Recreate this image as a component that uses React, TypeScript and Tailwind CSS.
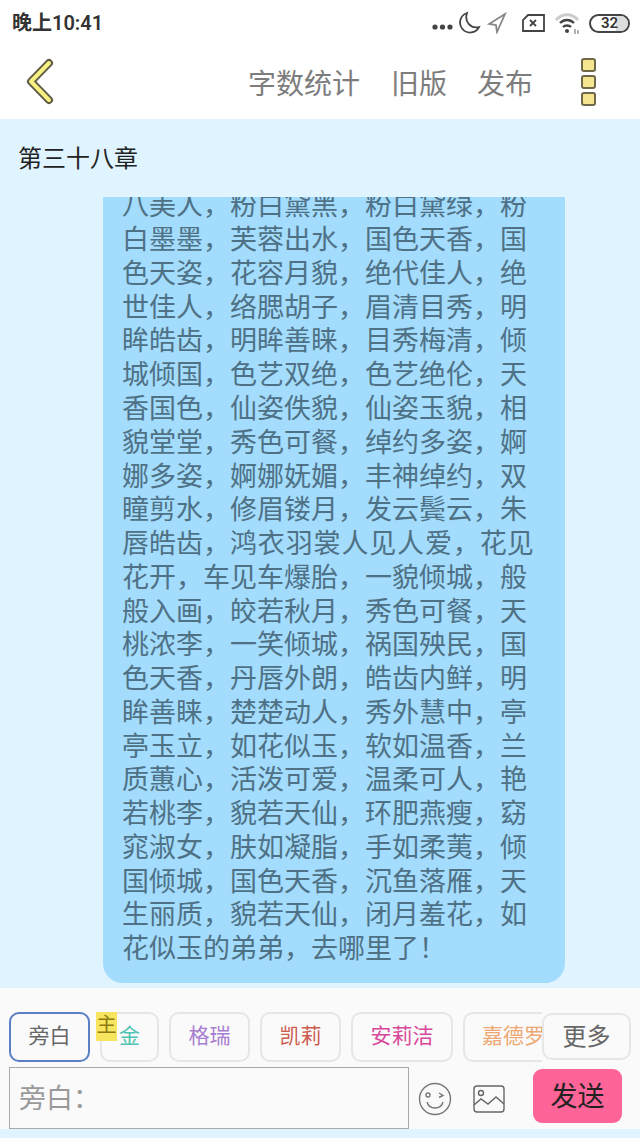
const FONT = "font-['Roboto','Noto_Sans_CJK_SC',sans-serif]";

const lines = [
  "八美人，粉白黛黑，粉白黛绿，粉",
  "白墨墨，芙蓉出水，国色天香，国",
  "色天姿，花容月貌，绝代佳人，绝",
  "世佳人，络腮胡子，眉清目秀，明",
  "眸皓齿，明眸善睐，目秀梅清，倾",
  "城倾国，色艺双绝，色艺绝伦，天",
  "香国色，仙姿佚貌，仙姿玉貌，相",
  "貌堂堂，秀色可餐，绰约多姿，婀",
  "娜多姿，婀娜妩媚，丰神绰约，双",
  "瞳剪水，修眉镂月，发云鬓云，朱",
  "",
  "花开，车见车爆胎，一貌倾城，般",
  "般入画，皎若秋月，秀色可餐，天",
  "桃浓李，一笑倾城，祸国殃民，国",
  "色天香，丹唇外朗，皓齿内鲜，明",
  "眸善睐，楚楚动人，秀外慧中，亭",
  "亭玉立，如花似玉，软如温香，兰",
  "质蕙心，活泼可爱，温柔可人，艳",
  "若桃李，貌若天仙，环肥燕瘦，窈",
  "窕淑女，肤如凝脂，手如柔荑，倾",
  "国倾城，国色天香，沉鱼落雁，天",
  "生丽质，貌若天仙，闭月羞花，如",
  "花似玉的弟弟，去哪里了！",
];

function Chip({ label, color, w, active }: { label: string; color: string; w: string; active?: boolean }) {
  return (
    <div
      className={`${w} h-[50px] shrink-0 flex items-center justify-center rounded-[10px] border-2 text-[21px] ${color} ${
        active ? "border-[#5b7fc4]" : "border-[#e6e6e6]"
      }`}
    >
      {label}
    </div>
  );
}

function Dot() {
  return <div className="w-[15px] h-[14px] rounded-[3px] bg-[#f5e58f] border-2 border-[#70684a]" />;
}

export default function App() {
  return (
    <div className={`${FONT} w-[640px] h-[1138px] overflow-hidden flex flex-col bg-[#dff4ff]`}>
      <div className="bg-white h-[119px] shrink-0 flex flex-col">
        <div className="h-[46px] flex items-center pl-3 pr-[10px]">
          <span className="text-[20px] font-semibold text-[#333]">晚上10:41</span>
          <div className="ml-auto flex items-center">
            <svg width="21" height="8" viewBox="0 0 21 8" className="mt-2">
              <circle cx="3" cy="4" r="2.6" fill="#444" />
              <circle cx="10.5" cy="4" r="2.6" fill="#444" />
              <circle cx="18" cy="4" r="2.6" fill="#444" />
            </svg>
            <svg width="24" height="26" viewBox="0 0 24 26" className="ml-[5px]" fill="none" stroke="#444" strokeWidth="1.8">
              <path d="M9 3 A10 10 0 1 0 21 17 C13 19 6 12 9 3 Z" />
            </svg>
            <svg width="20" height="22" viewBox="0 0 20 22" className="ml-[5px]" fill="none" stroke="#888" strokeWidth="1.8">
              <path d="M18 2 L2 12 L9 13 L10 20 Z" />
            </svg>
            <svg width="25" height="20" viewBox="0 0 25 20" className="ml-[14px]" fill="none" stroke="#444" strokeWidth="1.8">
              <path d="M7 2 H23 V18 H2 V7 Z" />
              <path d="M9 7 L15 13 M15 7 L9 13" />
            </svg>
            <svg width="26" height="24" viewBox="0 0 26 24" className="ml-[8px]" fill="none">
              <path d="M2 9 C8 2 18 2 24 9" stroke="#ccc" strokeWidth="3" />
              <path d="M6 12 C10 8 16 8 20 12" stroke="#444" strokeWidth="2.4" />
              <path d="M9 16 C11 14 15 14 17 16" stroke="#444" strokeWidth="2.4" />
              <circle cx="13" cy="20" r="2" fill="#444" />
              <path d="M21 18 V23 M24 19 V23" stroke="#666" strokeWidth="1" />
            </svg>
            <div className="ml-[9px] relative w-[41px] h-[19px] rounded-full border-2 border-[#444] overflow-hidden flex items-center justify-center">
              <div className="absolute right-0 top-0 bottom-0 w-[12px] bg-[#ddd]" />
              <span className="relative text-[15px] font-semibold text-[#333] leading-none">32</span>
            </div>
          </div>
        </div>
        <div className="flex-1 flex items-center relative">
          <svg width="34" height="48" viewBox="0 0 34 48" className="ml-[24px] -mt-[2px]">
            <path d="M25 5 L7 23.5 L25 42" fill="none" stroke="#5f5c4a" strokeWidth="8" strokeLinecap="round" strokeLinejoin="round" />
            <path d="M25 5 L7 23.5 L25 42" fill="none" stroke="#f8f07f" strokeWidth="4" strokeLinecap="round" strokeLinejoin="round" />
          </svg>
          <div className="ml-auto flex items-center text-[28px] text-[#7d7d7d] mr-[44px]">
            <span className="mt-[4px]">字数统计</span>
            <span className="mt-[4px] ml-[31px]">旧版</span>
            <span className="mt-[4px] ml-[30px]">发布</span>
            <div className="ml-[48px] flex flex-col gap-[3px] -mt-[1px]">
              <Dot />
              <Dot />
              <Dot />
            </div>
          </div>
        </div>
      </div>

      <div className="h-[78px] shrink-0 flex items-center pl-[18px] pt-[2px] text-[24px] text-[#222]">第三十八章</div>

      <div className="h-[791px] shrink-0 overflow-hidden flex flex-col justify-end items-start pl-[103px]">
        <div className="w-[462px] mb-[5px] shrink-0 bg-[#a3dcfd] rounded-b-[20px] pl-[19px] pb-[16px] text-[27px] leading-[33.77px] text-[#4f7185]">
          {lines.map((l, i) =>
            l ? (
              <div key={i} className="whitespace-nowrap">{l}</div>
            ) : (
              <div key={i} className="whitespace-nowrap">
                唇皓齿，<span className="tracking-[0.85px]">鸿衣羽裳人见人爱</span>，花见
              </div>
            )
          )}
        </div>
      </div>

      <div className="h-[141px] shrink-0 bg-[#fafafa] flex flex-col">
        <div className="relative h-[79px] pt-[24px] pl-[9px] flex">
          <div className="w-[533px] overflow-hidden flex gap-[10px]">
            <Chip label="旁白" color="text-[#666]" w="w-[81px]" active />
            <Chip label="金" color="text-[#4fc4b4]" w="w-[59px]" />
            <Chip label="格瑞" color="text-[#a87fd0]" w="w-[81px]" />
            <Chip label="凯莉" color="text-[#cd5c50]" w="w-[81px]" />
            <Chip label="安莉洁" color="text-[#d8489a]" w="w-[102px]" />
            <Chip label="嘉德罗斯" color="text-[#eda873]" w="w-[122px]" />
          </div>
          <div className="absolute left-[96px] top-[24px] w-[21px] h-[29px] bg-[#f7e560] text-[20px] leading-[27px] text-[#8a7a10] text-center">主</div>
          <div className="absolute left-[542px] top-[25px] w-[89px] h-[47px] bg-[#fafafa] rounded-[10px] border-2 border-[#e6e6e6] flex items-center justify-center text-[24px] text-[#666]">更多</div>
        </div>
        <div className="flex items-start pl-[9px]">
          <div className="w-[400px] h-[62px] border border-[#aaa] flex items-center pl-[9px] pt-[3px] text-[27px] text-[#999]">旁白：</div>
          <svg width="34" height="34" viewBox="0 0 34 34" className="ml-[9px] mt-[15px]" fill="none" stroke="#777" strokeWidth="1.4">
            <circle cx="17" cy="17" r="15.5" />
            <circle cx="10" cy="13" r="2" />
            <path d="M21 11 L25 13.5 L21 15.5" />
            <path d="M9 20 C11 28 23 28 25 20" />
          </svg>
          <svg width="34" height="30" viewBox="0 0 34 30" className="ml-[20px] mt-[17px]" fill="none" stroke="#666" strokeWidth="1.4">
            <rect x="2" y="2" width="30" height="26" rx="3" />
            <circle cx="9" cy="9" r="2.5" />
            <path d="M2 21 L9 15 L16 20 L24 13 L32 20" />
          </svg>
          <div className="ml-[27px] mt-[2px] w-[89px] h-[54px] rounded-[9px] bg-[#ff6498] flex items-center justify-center pt-[3px] text-[27px] text-[#222]">发送</div>
        </div>
      </div>
      <div className="flex-1" />
    </div>
  );
}
